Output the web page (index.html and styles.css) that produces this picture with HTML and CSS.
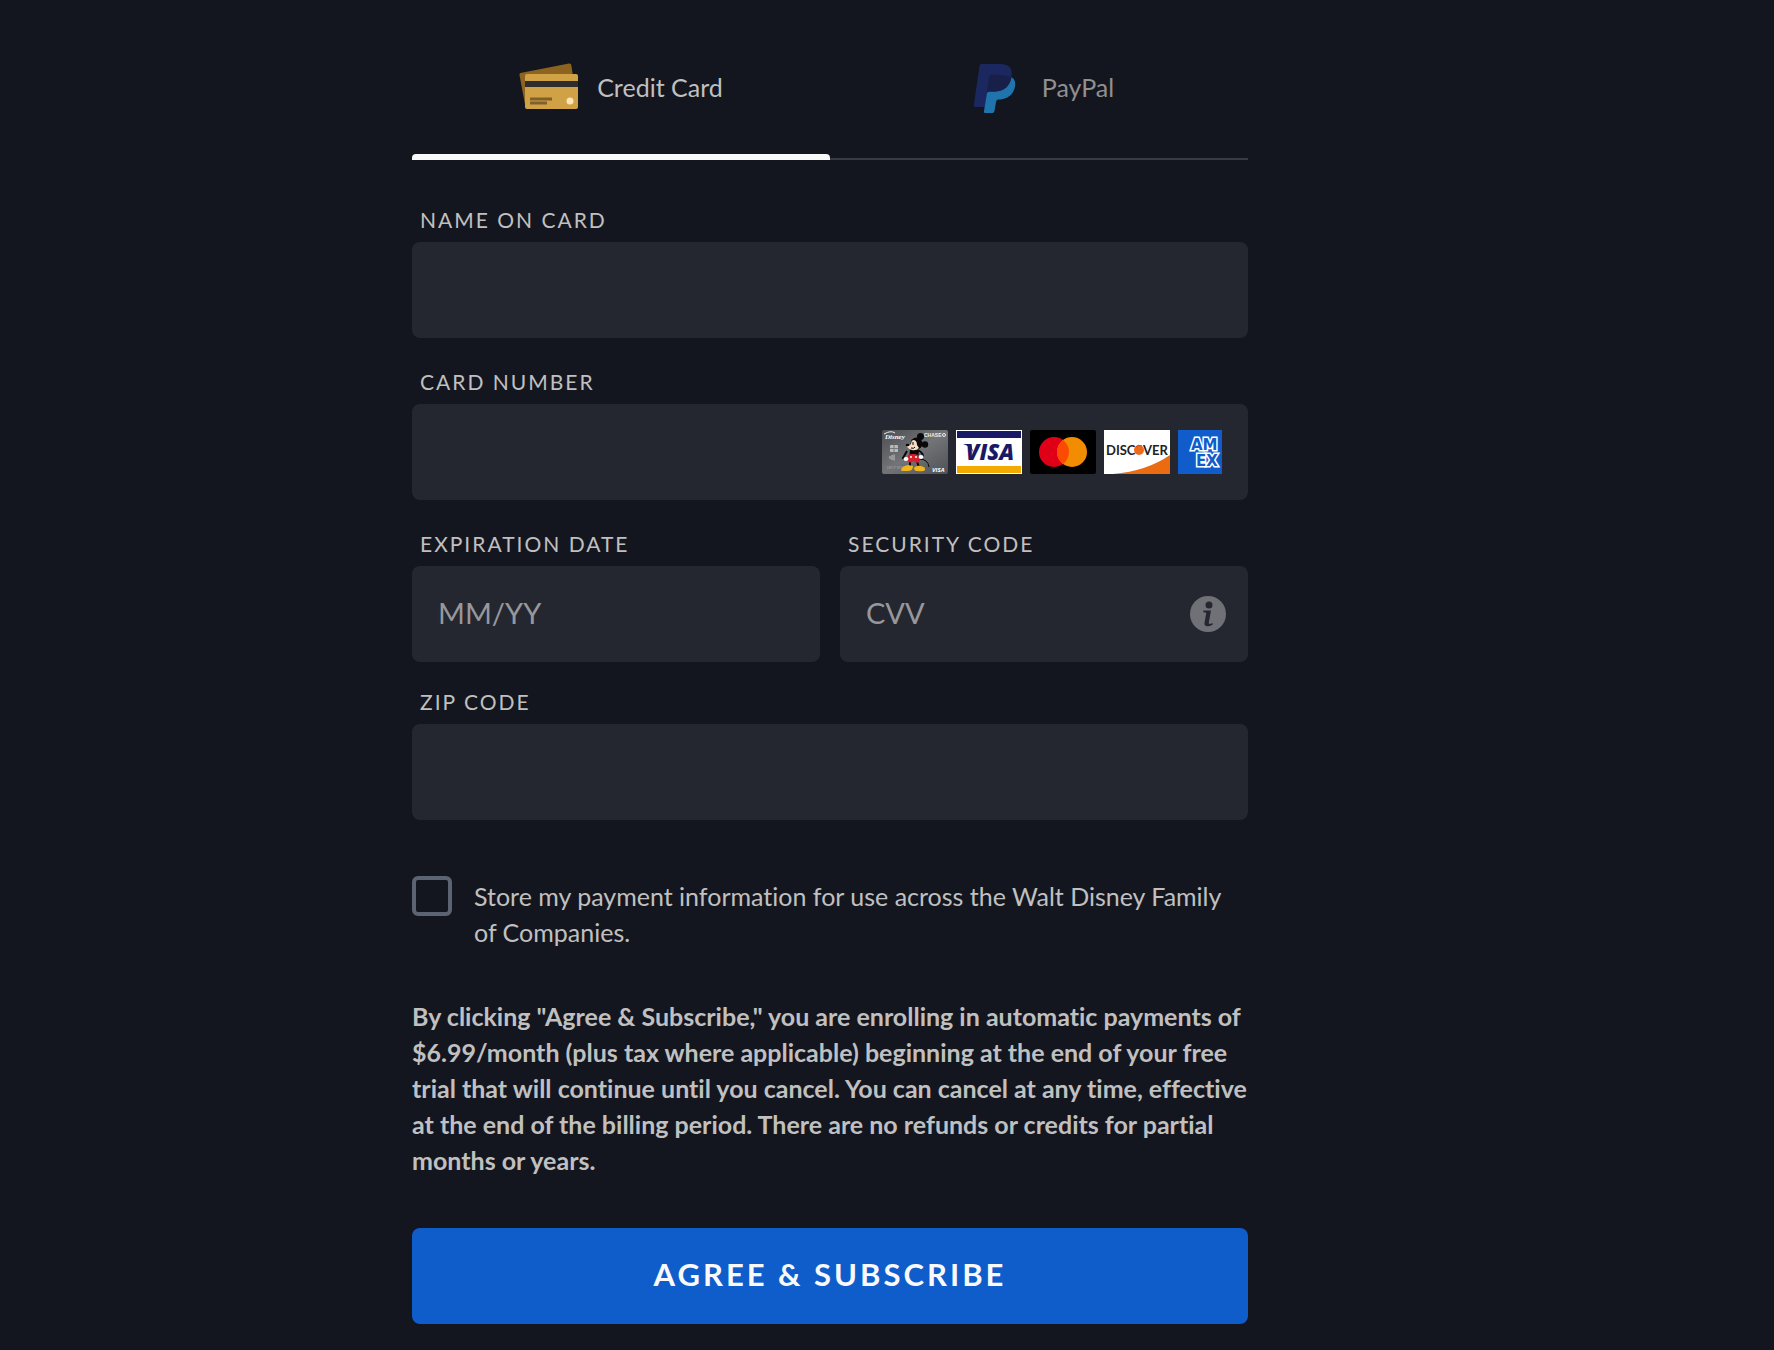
FILE: index.html
```html
<!DOCTYPE html>
<html lang="en">
<head>
    <meta charset="UTF-8">
    <meta name="viewport" content="width=device-width, initial-scale=1.0">
    <title>Payment</title>
    <link rel="stylesheet" href="styles.css">
</head>
<body>

    <main class="payment">
        <div class="tabs" role="tablist">
            <button type="button" class="tab active" role="tab" aria-selected="true">
                <svg class="tab-icon" viewBox="0 0 60 52" aria-hidden="true">
                    <path d="M1.500 12 L50 2.500 Q52 2.200 52.300 4 L55 22 L8 47 L6.500 46 L0.500 14 Q0.200 12.400 1.500 12Z" fill="#8c6420"/>
                    <rect x="6" y="13" width="53" height="35" rx="2" fill="#d1a146"/>
                    <rect x="6" y="20" width="53" height="6" fill="#2d2d2d"/>
                    <path d="M11 38h22M11 42h17" stroke="#80602a" stroke-width="3"/>
                    <circle cx="51" cy="40" r="3.500" fill="#ffe5b4"/>
                </svg>
                <span>Credit Card</span>
            </button>
            <button type="button" class="tab" role="tab" aria-selected="false">
                <svg class="tab-icon" viewBox="0 0 60 52" aria-hidden="true">
                    <path d="M17 3H37C45 3 49 8 47.500 16C46 26 40 30 29 30H24L21 46H12Q9.500 46 10 43L15.500 5Q16 3 17 3Z" fill="#1b275f"/>
                    <path d="M47.500 16C52 19 52 24 50 29C47 36 41 38.500 34 38.500Q32.500 38.500 32 41L30.500 50Q30 52 28.500 52H21Q19.500 52 20 50L23 32Q23.300 30.500 25 30.500H31C40 30 46 25 47.500 16Z" fill="#1f74ae"/>
                    <path d="M26.500 14Q36 13 47.500 16C46 25 40 30.500 31 30.500H25Q23.500 30.500 23 32L25 16Q25.300 14.300 26.500 14Z" fill="#181f48"/>
                </svg>
                <span>PayPal</span>
            </button>
        </div>

        <form class="payment-form">
            <div class="form-group">
                <label for="name">NAME ON CARD</label>
                <div class="field">
                    <input type="text" id="name" name="name">
                </div>
            </div>

            <div class="form-group">
                <label for="card-number">CARD NUMBER</label>
                <div class="field">
                    <input type="text" id="card-number" name="card-number">
                    <div class="card-logos">
                        <!-- Disney Chase Visa -->
                        <svg viewBox="0 0 66 44" aria-hidden="true">
                            <defs>
                                <linearGradient id="silver" x2="1" y2="1">
                                    <stop offset="0" stop-color="#4c4d50"/>
                                    <stop offset="0.500" stop-color="#737477"/>
                                    <stop offset="1" stop-color="#505154"/>
                                </linearGradient>
                            </defs>
                            <rect width="66" height="44" rx="2" fill="url(#silver)"/>
                            <path d="M2 4Q9 0 13 3" fill="none" stroke="#eee"/>
                            <text x="3" y="9" class="disney-text">Disney</text>
                            <text x="42" y="7" class="chase-text">CHASE</text>
                            <circle cx="62" cy="5" r="1.500" fill="none" stroke="#eee"/>
                            <rect x="8" y="15" width="8" height="7" rx="1" fill="#b9b9b9"/>
                            <path d="M8 18.500h8M12 15v7" stroke="#77787a"/>
                            <path d="M8 26v3M10 25v5M12 24.500v6" stroke="#c4c4c4"/>
                            <text x="5" y="39" class="name-text">LET IT WISH</text>
                            <text x="50" y="42" class="visa-small">VISA</text>
                            <path d="M25 21L21 28L27 30M36 20Q43 24 40 28L36 27M28 31V37M35 31L37 38" fill="none" stroke="#080808" stroke-width="2"/>
                            <path d="M37 29Q46 29 47 37" fill="none" stroke="#080808"/>
                            <path d="M28 19L37 20L36 30L27 30Z" fill="#080808"/>
                            <path d="M26 25Q31 23 36 25L38 31Q36 34 33 32L31 31Q28 34 26 31Z" fill="#d71f2c"/>
                            <circle cx="29" cy="27" r="1" fill="#fff"/>
                            <circle cx="34" cy="27" r="1" fill="#fff"/>
                            <ellipse cx="24" cy="29" rx="2.500" ry="2" fill="#fff"/>
                            <ellipse cx="39" cy="27" rx="2.500" ry="2" fill="#fff"/>
                            <circle cx="38.500" cy="6.500" r="3.500" fill="#080808"/>
                            <circle cx="43" cy="14.500" r="3.200" fill="#080808"/>
                            <circle cx="34.500" cy="13.500" r="6" fill="#080808"/>
                            <path d="M31 10Q35 10 35 15L37 18Q34 21 30 20Q26 19 25 16Q28 16 29 14Q29 11 31 10Z" fill="#f5ddc4"/>
                            <ellipse cx="25.500" cy="15" rx="1.800" ry="1.200" fill="#080808"/>
                            <path d="M31 12v3M29 18q3 1 4-1" stroke="#080808" fill="none"/>
                            <path d="M19 40Q20 36 26 35L31 36Q31 41 26 41H21Q19 41 19 40ZM32 38Q34 35 39 36Q44 37 43 40Q42 42 35 41Q32 41 32 38Z" fill="#f3b51d"/>
                        </svg>
                        <!-- Visa -->
                        <svg viewBox="0 0 66 44" aria-hidden="true">
                            <rect width="66" height="44" fill="#fff"/>
                            <rect x="1" y="1" width="64" height="7" fill="#191966"/>
                            <rect x="1" y="36" width="64" height="7" fill="#f2a900"/>
                            <path d="M7 14H15L17 22Q14 16 7 14Z" fill="#191966"/>
                            <text x="34" y="30" class="visa-text">VISA</text>
                        </svg>
                        <!-- Mastercard -->
                        <svg viewBox="0 0 66 44" aria-hidden="true">
                            <rect width="66" height="44" rx="2" fill="#000"/>
                            <circle cx="24" cy="22" r="15" fill="#df0018"/>
                            <circle cx="42" cy="22" r="15" fill="#f28c00"/>
                            <path d="M33 10A15 15 0 0 1 33 34A15 15 0 0 1 33 10Z" fill="#fb4b00"/>
                        </svg>
                        <!-- Discover -->
                        <svg viewBox="0 0 66 44" aria-hidden="true">
                            <rect width="66" height="44" fill="#fff"/>
                            <path d="M9 44Q43 41 66 25V44Z" fill="#ea6b10"/>
                            <text x="2" y="25" class="discover-text">DISC</text>
                            <circle cx="35" cy="20" r="5" fill="#ee6a1a"/>
                            <path d="M32 17Q34 14 38 16" fill="none" stroke="#c94b18"/>
                            <text x="39" y="25" class="discover-text">VER</text>
                        </svg>
                        <!-- Amex -->
                        <svg viewBox="0 0 66 44" aria-hidden="true">
                            <rect width="66" height="44" fill="#105ccb"/>
                            <text x="13" y="20" class="amex-text">AM</text>
                            <text x="18" y="36" class="amex-text">EX</text>
                        </svg>
                    </div>
                </div>
            </div>

            <div class="form-row">
                <div class="form-group">
                    <label for="expiration">EXPIRATION DATE</label>
                    <div class="field">
                        <input type="text" id="expiration" name="expiration" placeholder="MM/YY">
                    </div>
                </div>
                <div class="form-group">
                    <label for="cvv">SECURITY CODE</label>
                    <div class="field">
                        <input type="text" id="cvv" name="cvv" placeholder="CVV">
                        <button type="button" class="info" aria-label="About the security code">
                            <svg viewBox="0 0 36 36" aria-hidden="true">
                                <circle cx="18" cy="18" r="18" fill="#707177"/>
                                <circle cx="19" cy="9" r="3.500" fill="#252730"/>
                                <path d="M13.500 14.500H21L18.800 26.500Q18.500 28.200 20.200 27.800L22.800 27.200V28.500Q20.500 30.500 17.500 30.300Q14 30 14.500 26.800L16.200 17.500Q16.300 16.500 15.300 16.400L13.200 16.200Z" fill="#252730"/>
                            </svg>
                        </button>
                    </div>
                </div>
            </div>

            <div class="form-group">
                <label for="zip">ZIP CODE</label>
                <div class="field">
                    <input type="text" id="zip" name="zip">
                </div>
            </div>

            <div class="store">
                <input type="checkbox" id="store" name="store">
                <label for="store">Store my payment information for use across the Walt Disney Family of Companies.</label>
            </div>

            <p class="terms">By clicking "Agree &amp; Subscribe," you are enrolling in automatic payments of $6.99/month (plus tax where applicable) beginning at the end of your free trial that will continue until you cancel. You can cancel at any time, effective at the end of the billing period. There are no refunds or credits for partial months or years.</p>

            <button type="submit" class="submit">AGREE &amp; SUBSCRIBE</button>
        </form>
    </main>

</body>
</html>
```
FILE: styles.css
```css
* {
    box-sizing: border-box;
}

body {
    font-family: Lato, "Open Sans", sans-serif;
    font-variant-ligatures: no-common-ligatures;
    background-color: #14161f;
    color: #c0c0c0;
    margin: 0;
    padding: 0 130px 24px 16px;
}

.payment {
    max-width: 836px;
    margin: 0 auto;
}

button,
input {
    font-family: inherit;
}

.tabs {
    display: flex;
    height: 160px;
    margin-bottom: 46px;
    box-shadow: inset 0 -2px #393a43;
}

.tab {
    position: relative;
    flex: 1;
    display: flex;
    justify-content: center;
    align-items: center;
    gap: 18px;
    padding: 13px 0 0;
    background: none;
    border: none;
    color: #909090;
    font-size: 25px;
    cursor: pointer;
}

.tab.active {
    color: #c0c0c0;
}

.tab.active::after {
    content: "";
    position: absolute;
    left: 0;
    right: 0;
    bottom: 0;
    height: 6px;
    background-color: #f9f9f9;
    border-radius: 4px 4px 0 0;
}

.tab-icon {
    width: 60px;
    height: 52px;
}

.form-group {
    flex: 1;
    min-width: 0;
    margin-bottom: 30px;
}

.form-group label {
    display: block;
    padding-left: 8px;
    margin-bottom: 8px;
    font-size: 21px;
    line-height: 28px;
    letter-spacing: 2px;
}

.form-row {
    display: flex;
    gap: 20px;
}

.form-row .form-group {
    margin-bottom: 26px;
}

.field {
    display: flex;
    align-items: center;
    height: 96px;
    padding: 0 26px;
    background-color: #252730;
    border-radius: 8px;
}

.field input {
    flex: 1;
    min-width: 0;
    height: 100%;
    padding: 0 0 4px;
    background: none;
    border: none;
    outline: none;
    color: #f9f9f9;
    font-size: 29px;
}

.field input::placeholder {
    color: #97989c;
    opacity: 1;
}

/* the last logo is cut off at the edge of the strip */
.card-logos {
    display: flex;
    gap: 8px;
    width: 340px;
    overflow: hidden;
}

.card-logos svg {
    flex: none;
    width: 66px;
    height: 44px;
}

.disney-text {
    font: italic bold 7px "Liberation Serif", serif;
    fill: #fff;
}

.chase-text {
    font: bold 5px "Liberation Sans", sans-serif;
    fill: #eee;
}

.name-text {
    font: 3px "Liberation Sans", sans-serif;
    fill: #aaa;
}

.visa-small {
    font: italic bold 6px "Open Sans", sans-serif;
    fill: #fff;
}

.visa-text {
    font: italic 800 22px "Open Sans", sans-serif;
    fill: #191966;
    text-anchor: middle;
}

.discover-text {
    font: bold 13px Lato, sans-serif;
    fill: #222;
}

.amex-text {
    font: bold 15px "DejaVu Sans", sans-serif;
    fill: #105ccb;
    stroke: #fff;
    stroke-width: 3px;
    paint-order: stroke;
}

.info {
    width: 36px;
    height: 36px;
    margin-right: -4px;
    padding: 0;
    background: none;
    border: none;
    cursor: pointer;
}

.info svg {
    display: block;
}

.store {
    display: flex;
    align-items: flex-start;
    gap: 22px;
    margin: 56px 0 46px;
}

.store input {
    appearance: none;
    flex: none;
    width: 40px;
    height: 40px;
    margin: 0;
    border: 4px solid #5b6470;
    border-radius: 6px;
}

.store input:checked {
    background-color: #0f5ccb;
}

.store label {
    padding: 2px 24px 2px 0;
    font-size: 25px;
    line-height: 36px;
}

.terms {
    margin: 0 0 50px;
    font-size: 25px;
    font-weight: bold;
    line-height: 36px;
}

.submit {
    display: block;
    width: 100%;
    height: 96px;
    padding: 0 0 4px;
    background-color: #0f5ccb;
    border: none;
    border-radius: 8px;
    color: #f9f9f9;
    font-size: 31px;
    font-weight: bold;
    letter-spacing: 3px;
    cursor: pointer;
}

.submit:hover {
    background-color: #2672de;
}
```
